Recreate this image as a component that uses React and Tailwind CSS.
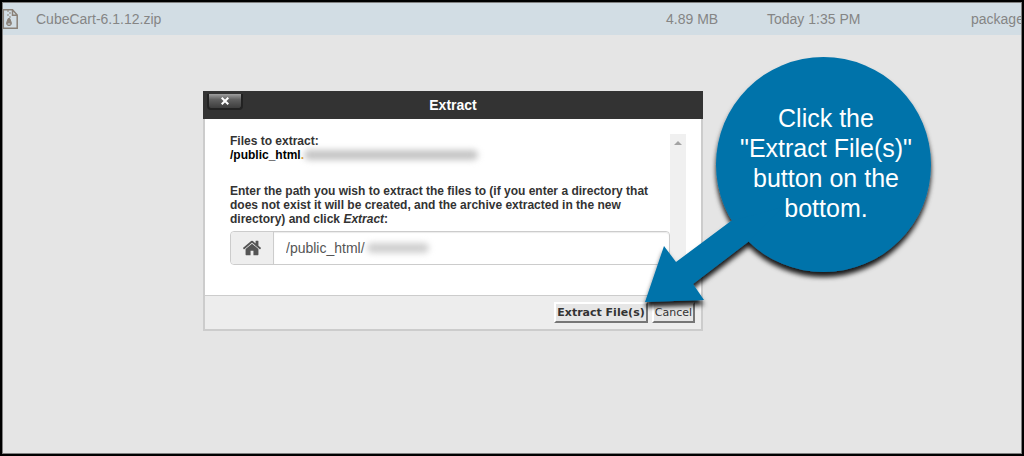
import { useState } from "react";

function ZipIcon() {
  return (
    <svg viewBox="0 0 16 20" className="block w-4 h-5" fill="none" stroke="#8a8178" strokeWidth="1.5">
      <path d="M0 .8H9.5L14.2 6V19.2H0M.3 .8V19.2M9.5 .8V6.2H14.2" />
      <path d="M4 2h2M6 4h2M4 6h2M6 8h2" strokeWidth="1.2" />
      <path d="M5.2 9.5h1.6L8.3 13.6c.5 2-.8 3-2.3 3s-2.8-1-2.3-3z" fill="#8a8178" strokeWidth="1" />
      <path d="M4.8 15h2.4" stroke="#d2dde4" strokeWidth="1" />
    </svg>
  );
}

function HomeIcon() {
  return (
    <svg viewBox="0 0 1792 1792" className="h-5 w-5" fill="#555">
      <path d="M1472 992v480q0 26-19 45t-45 19h-384v-384h-256v384h-384q-26 0-45-19t-19-45v-480q0-1 .5-3t.5-3l575-474 575 474q1 2 1 6zm223-69l-62 74q-8 9-21 11h-3q-13 0-21-7l-692-577-692 577q-12 8-24 7-13-2-21-11l-62-74q-8-10-7-23.5t11-21.5l719-599q32-26 76-26t76 26l244 204v-195q0-14 9-23t23-9h192q14 0 23 9t9 23v408l219 182q10 8 11 21.5t-7 23.5z" />
    </svg>
  );
}

function FileRow() {
  return (
    <table className="w-full table-fixed bg-[#d2dde4] text-sm text-[#858585]">
      <colgroup>
        <col className="w-[33px]" />
        <col />
        <col className="w-[101px]" />
        <col className="w-[204px]" />
        <col className="w-[50px]" />
      </colgroup>
      <tbody>
        <tr className="h-8 whitespace-nowrap">
          <td><ZipIcon /></td>
          <td>CubeCart-6.1.12.zip</td>
          <td>4.89 MB</td>
          <td>Today 1:35 PM</td>
          <td>package</td>
        </tr>
      </tbody>
    </table>
  );
}

function Callout() {
  return (
    <div className="absolute left-[430px] -top-11 w-[312px] h-[280px] pointer-events-none">
      <svg viewBox="0 0 312 280" className="absolute inset-0 w-full h-full">
        <defs>
          <filter id="shadow" x="-10%" y="-10%" width="120%" height="120%">
            <feDropShadow dx="0" dy="5" stdDeviation="2.5" floodColor="#000" floodOpacity="0.9" />
          </filter>
        </defs>
        <g fill="#0073aa" filter="url(#shadow)">
          <circle cx="190.5" cy="117.5" r="107.5" />
          <path d="M12 255L31 199L43 215L98 174L150 160L115 195L60 237L71 253Z" />
        </g>
      </svg>
      <p className="absolute left-[85px] top-14 w-[216px] text-center text-[25px] leading-[30px] text-white">
        Click the<br />"Extract File(s)"<br />button on the<br />bottom.
      </p>
    </div>
  );
}

function ExtractDialog() {
  const [path, setPath] = useState("/public_html/");
  const button =
    "h-[21px] border-2 border-t-white border-l-white border-r-[#767676] border-b-[#767676] bg-[#e6e6e6] px-px text-[11px] leading-4 text-[#333] font-['DejaVu_Sans',sans-serif] whitespace-nowrap";

  return (
    <div role="dialog" aria-labelledby="dialog-title" className="relative w-[500px]">
      {/* Title bar */}
      <div className="relative h-7 bg-[#333] text-center">
        <button
          aria-label="Close"
          className="absolute left-1 top-[3px] flex h-4 w-9 items-center justify-center rounded-b border-x-2 border-b-2 border-[#222] bg-linear-to-b from-[#a0a0a0] via-[#606060] via-40% to-[#3e3e3e]"
        >
          <svg viewBox="0 0 8 8" className="h-2 w-2" stroke="#fff" strokeWidth="2">
            <path d="M.7 .7L7.3 7.3M7.3 .7L.7 7.3" />
          </svg>
        </button>
        <h1 id="dialog-title" className="text-sm leading-7 font-bold text-white">Extract</h1>
      </div>

      <div className="border-2 border-t-0 border-[#ccc] bg-white">
        <div className="flex pt-[15px] pl-[25px] pr-[15px] pb-[30px] text-xs leading-[14px] font-bold text-[#333]">
          <div className="min-w-0 flex-1">
            <p>Files to extract:</p>
            <p className="flex items-center text-black">
              /public_html<span className="text-[#d9952b]">.</span>
              <span className="h-2.5 w-[174px] rounded-full bg-[#c4c4c4] blur-[3px]"></span>
            </p>
            <label htmlFor="path" className="mt-[22px] block">
              Enter the path you wish to extract the files to (if you enter a directory that
              does not exist it will be created, and the archive extracted in the new
              directory) and click <em>Extract</em>:
            </label>
            <div className="relative mt-[5px] flex h-[34px] rounded border border-[#ccc]">
              <span className="flex w-[43px] items-center justify-center rounded-l border-r border-[#ccc] bg-[#eee]">
                <HomeIcon />
              </span>
              <input
                id="path"
                value={path}
                onChange={(e) => setPath(e.target.value)}
                className="min-w-0 flex-1 rounded-r bg-white px-3 text-sm font-normal text-[#555] outline-none shadow-[inset_0_1px_1px_rgba(0,0,0,0.08)]"
              />
              <span className="absolute left-[136px] top-[11px] h-2.5 w-[62px] rounded-full bg-[#cfcfcf] blur-[3px]"></span>
            </div>
          </div>
          <div className="flex w-4 justify-center bg-[#f0f0f0] pt-[7px]">
            <svg viewBox="0 0 8 4" className="h-1 w-2" fill="#a3a3a3">
              <path d="M4 0L8 4H0Z" />
            </svg>
          </div>
        </div>
        <div className="flex h-[34px] justify-end gap-1 border-t border-[#ccc] bg-[#ededed] pt-1.5 pr-1.5">
          <button className={button + " font-bold"}>Extract File(s)</button>
          <button className={button}>Cancel</button>
        </div>
      </div>

      <Callout />
    </div>
  );
}

export default function App() {
  return (
    <div className="flex min-h-screen border-2 border-black bg-[#e5e5e5] font-['Liberation_Sans',Arial,sans-serif]">
      <div className="min-w-0 flex-1 overflow-hidden border border-[#808080]">
        <FileRow />
        <main className="flex justify-center pt-14 pr-[118px]">
          <ExtractDialog />
        </main>
      </div>
    </div>
  );
}
